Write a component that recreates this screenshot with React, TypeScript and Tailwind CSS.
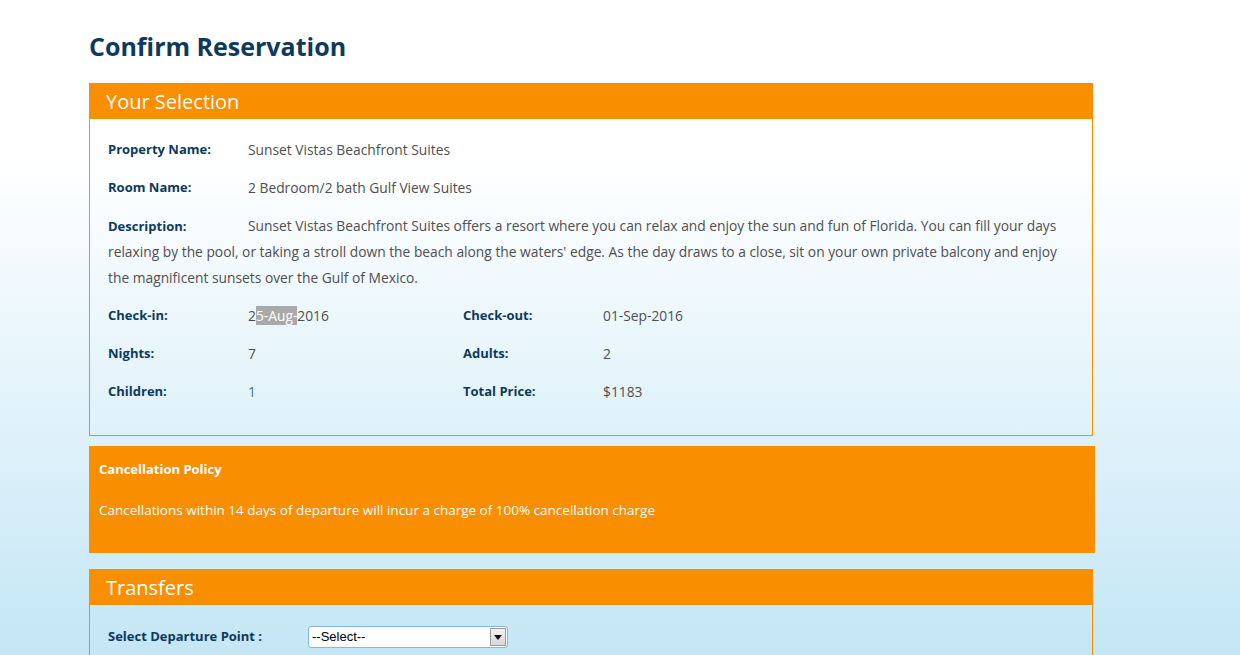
import React from "react";

const font = { fontFamily: '"Trebuchet MS", "Open Sans", "DejaVu Sans", sans-serif' };

function Row({ label, value, valueClass = "" }: { label: string; value: React.ReactNode; valueClass?: string }) {
  return (
    <div className="flex h-[38px] items-center">
      <div className="w-[140px] font-bold text-[#0c3a5c]">{label}</div>
      <div className={`text-[13.8px] text-[#4f4f4f] ${valueClass}`}>{value}</div>
    </div>
  );
}

export default function App() {
  return (
    <div
      className="min-h-screen bg-[linear-gradient(to_bottom,#ffffff_0px,#ffffff_160px,#c4e6f5_655px)] text-[13px]"
      style={font}
    >
      <div className="ml-[89px] w-[1005px] pt-[27px]">
        <h1 className="text-[25px] font-bold leading-[38px] text-[#0c3a5c]">Confirm Reservation</h1>

        <div className="mt-[18px] border border-[#f98e00] w-[1004px]">
          <div className="flex h-[35px] items-center bg-[#f98e00] px-[16px] text-[20px] text-white">Your Selection</div>
          <div className="px-[18px] pt-[12px] pb-[24px]">
            <Row label="Property Name:" value="Sunset Vistas Beachfront Suites" />
            <Row label="Room Name:" value="2 Bedroom/2 bath Gulf View Suites" />
            <div className="flex py-[6px] leading-[26px] text-[13.8px] text-[#4f4f4f] pr-[10px]">
              <p>
                <span className="float-left w-[140px] text-[13px] font-bold text-[#0c3a5c]">Description:</span>
                Sunset Vistas Beachfront Suites offers a resort where you can relax and enjoy the sun and fun of Florida. You can fill your days relaxing by the pool, or taking a stroll down the beach along the waters' edge. As the day draws to a close, sit on your own private balcony and enjoy the magnificent sunsets over the Gulf of Mexico.
              </p>
            </div>
            <div className="flex">
              <div className="w-[355px]">
                <Row
                  label="Check-in:"
                  value={
                    <>
                      2<span className="bg-[#a9a9a9] text-white">5-Aug-</span>2016
                    </>
                  }
                />
                <Row label="Nights:" value="7" />
                <Row label="Children:" value="1" valueClass="!text-[#4a7090]" />
              </div>
              <div>
                <Row label="Check-out:" value="01-Sep-2016" />
                <Row label="Adults:" value="2" />
                <Row label="Total Price:" value="$1183" />
              </div>
            </div>
          </div>
        </div>

        <div className="mt-[10px] h-[107px] w-[1006px] bg-[#f98e00] px-[10px] pt-[14px] text-white">
          <div className="font-bold leading-[18px]">Cancellation Policy</div>
          <div className="mt-[23px] text-[13.5px] leading-[18px]">Cancellations within 14 days of departure will incur a charge of 100% cancellation charge</div>
        </div>

        <div className="mt-[16px] border border-[#f98e00] w-[1004px]">
          <div className="flex h-[35px] items-center bg-[#f98e00] px-[16px] text-[20px] text-white">Transfers</div>
          <div className="px-[18px] pt-[21px] pb-[20px]">
            <div className="flex items-center">
              <div className="w-[200px] font-bold text-[#0c3a5c]">Select Departure Point :</div>
              <div className="flex h-[22px] w-[200px] items-center rounded-[3px] border border-[#86b8da] bg-white pl-[3px] text-[13px] text-black" style={{ fontFamily: '"Liberation Sans", Arial, sans-serif' }}>
                <span className="flex-1">--Select--</span>
                <div className="flex h-[18px] w-[16px] items-center justify-center border border-[#9a9a9a] bg-[linear-gradient(to_bottom,#f4f4f4,#d6d6d6)] mr-[1px]">
                  <svg width="8" height="5" viewBox="0 0 8 5"><path d="M0 0h8L4 5z" fill="#111" /></svg>
                </div>
              </div>
            </div>
          </div>
        </div>
      </div>
    </div>
  );
}
